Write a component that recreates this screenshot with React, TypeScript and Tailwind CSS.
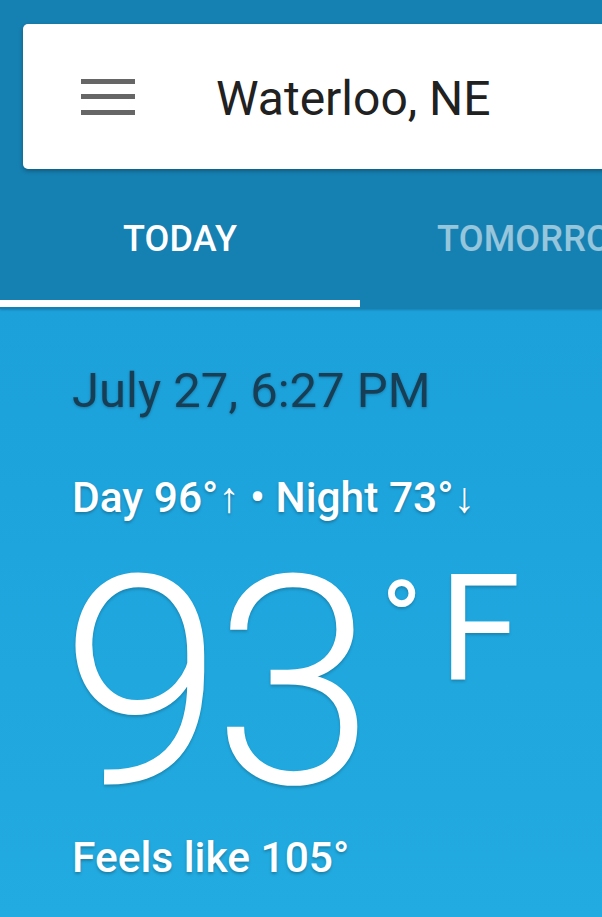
import React from 'react';

const font = { fontFamily: 'Roboto, "Noto Sans", sans-serif' };

const MenuIcon = () => (
    <div className="flex flex-col justify-between w-[54px] h-[36px] shrink-0">
        <span className="block h-[5px] bg-[#666666]"></span>
        <span className="block h-[5px] bg-[#666666]"></span>
        <span className="block h-[5px] bg-[#666666]"></span>
    </div>
);

const App: React.FC = () => {
    return (
        <div className="w-[602px] h-[917px] overflow-hidden flex flex-col bg-[#1fa5dd]" style={font}>
            {/* Cabecera */}
            <div className="bg-[#1580b2] pt-[24px] pb-[2px] shadow-[0_1px_2px_rgba(0,0,0,0.2)] relative z-10">
                <div className="ml-[23px] -mr-[10px] h-[145px] bg-white rounded-[5px] shadow-[0_2px_4px_rgba(0,0,0,0.3)] flex items-center pl-[58px]">
                    <MenuIcon />
                    <span className="ml-[81px] mt-[4px] text-[48px] leading-none text-[#212121]">Waterloo, NE</span>
                </div>

                {/* Tabs */}
                <div className="flex mt-[52px] overflow-hidden">
                    <div className="w-[360px] shrink-0 flex flex-col items-center">
                        <span className="text-[36px] font-medium leading-none text-white tracking-[0.2px]">TODAY</span>
                        <span className="mt-[43px] block w-full h-[7px] bg-white"></span>
                    </div>
                    <div className="w-[360px] shrink-0 flex flex-col items-center">
                        <span className="text-[36px] font-medium leading-none text-white/55 tracking-[0.2px] whitespace-nowrap">TOMORROW</span>
                    </div>
                </div>
            </div>

            {/* Contenido */}
            <div className="flex-1 bg-gradient-to-b from-[#1ca1db] to-[#22abe0] pl-[72px] pt-[57px]">
                <div className="text-[49px] leading-none text-[#173e54] [text-shadow:0_1px_3px_rgba(0,0,0,0.25)]">
                    July 27, 6:27 PM
                </div>
                <div className="mt-[62px] text-[42.5px] font-medium leading-none text-white [text-shadow:0_2px_3px_rgba(0,0,0,0.25)]">
                    Day 96°↑ • Night 73°↓
                </div>
                <div className="mt-[17px] flex items-start text-white [text-shadow:0_2px_3px_rgba(0,0,0,0.2)]">
                    <span className="text-[292px] font-light leading-none -ml-[11px] tracking-[-10px]">93</span>
                    <span className="text-[110px] leading-none mt-[29px] ml-[16px]">°</span>
                    <span className="text-[148px] leading-none mt-[19px] ml-[17px]">F</span>
                </div>
                <div className="mt-[8px] text-[42.5px] font-medium leading-none text-white [text-shadow:0_2px_3px_rgba(0,0,0,0.25)]">
                    Feels like 105°
                </div>
            </div>
        </div>
    );
};

export default App;
